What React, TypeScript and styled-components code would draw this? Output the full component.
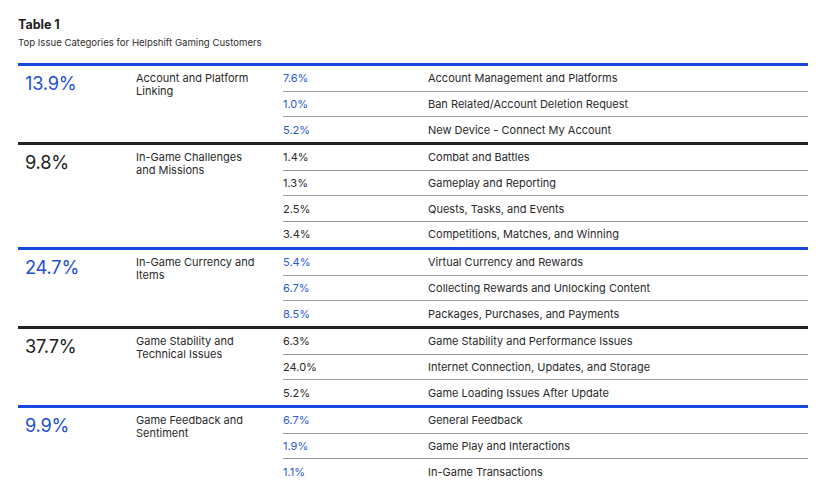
import React from "react";
import styled, { createGlobalStyle } from "styled-components";

const Global = createGlobalStyle`
  html, body { margin: 0; padding: 0; background: #fff; }
  body { font-family: Inter, "Noto Sans", sans-serif; color: #262626; }
`;

const Page = styled.div`
  padding: 17px 20px 0 18px;
  width: 828px;
  box-sizing: border-box;
`;

const Title = styled.div`
  font-size: 12.5px;
  font-weight: 700;
  color: #1d1d1d;
  line-height: 16px;
`;

const Subtitle = styled.div`
  font-size: 9.6px;
  color: #2e2e2e;
  line-height: 14px;
  margin-top: 3px;
  margin-bottom: 13px;
`;

const Group = styled.div<{ $blue: boolean }>`
  display: grid;
  grid-template-columns: 118px 147px 1fr;
  border-top: 3px solid ${(p) => (p.$blue ? "#1747dc" : "#222")};
`;

const Big = styled.div<{ $blue: boolean }>`
  padding: 5px 0 0 7px;
  font-size: 18.2px;
  line-height: 24px;
  color: ${(p) => (p.$blue ? "#1d4fd6" : "#222")};
  letter-spacing: -0.2px;
`;

const Category = styled.div`
  padding-top: 6px;
  font-size: 11px;
  line-height: 13px;
  color: #2a2a2a;
`;

const Subs = styled.div`
  display: flex;
  flex-direction: column;
`;

const SubRow = styled.div<{ $blue: boolean }>`
  display: grid;
  grid-template-columns: 145px 1fr;
  align-items: center;
  height: 24.7px;
  font-size: 11px;
  color: #2a2a2a;
  & + & {
    border-top: 1px solid ${(p) => (p.$blue ? "#8ea6ee" : "#9a9a9a")};
  }
`;

const SubPct = styled.span<{ $blue: boolean }>`
  color: ${(p) => (p.$blue ? "#2a5ad6" : "#2a2a2a")};
`;

const SubName = styled.span``;

type G = { pct: string; cat: string; blue: boolean; rows: [string, string][] };

const groups: G[] = [
  {
    pct: "13.9%",
    cat: "Account and Platform Linking",
    blue: true,
    rows: [
      ["7.6%", "Account Management and Platforms"],
      ["1.0%", "Ban Related/Account Deletion Request"],
      ["5.2%", "New Device - Connect My Account"],
    ],
  },
  {
    pct: "9.8%",
    cat: "In-Game Challenges and Missions",
    blue: false,
    rows: [
      ["1.4%", "Combat and Battles"],
      ["1.3%", "Gameplay and Reporting"],
      ["2.5%", "Quests, Tasks, and Events"],
      ["3.4%", "Competitions, Matches, and Winning"],
    ],
  },
  {
    pct: "24.7%",
    cat: "In-Game Currency and Items",
    blue: true,
    rows: [
      ["5.4%", "Virtual Currency and Rewards"],
      ["6.7%", "Collecting Rewards and Unlocking Content"],
      ["8.5%", "Packages, Purchases, and Payments"],
    ],
  },
  {
    pct: "37.7%",
    cat: "Game Stability and Technical Issues",
    blue: false,
    rows: [
      ["6.3%", "Game Stability and Performance Issues"],
      ["24.0%", "Internet Connection, Updates, and Storage"],
      ["5.2%", "Game Loading Issues After Update"],
    ],
  },
  {
    pct: "9.9%",
    cat: "Game Feedback and Sentiment",
    blue: true,
    rows: [
      ["6.7%", "General Feedback"],
      ["1.9%", "Game Play and Interactions"],
      ["1.1%", "In-Game Transactions"],
    ],
  },
];

const CatText = styled.div`
  max-width: 122px;
`;

export default function App() {
  return (
    <>
      <Global />
      <Page>
        <Title>Table 1</Title>
        <Subtitle>Top Issue Categories for Helpshift Gaming Customers</Subtitle>
        {groups.map((g) => (
          <Group key={g.pct + g.cat} $blue={g.blue}>
            <Big $blue={g.blue}>{g.pct}</Big>
            <Category>
              <CatText>{g.cat}</CatText>
            </Category>
            <Subs>
              {g.rows.map(([p, n]) => (
                <SubRow key={n} $blue={g.blue}>
                  <SubPct $blue={g.blue}>{p}</SubPct>
                  <SubName>{n}</SubName>
                </SubRow>
              ))}
            </Subs>
          </Group>
        ))}
      </Page>
    </>
  );
}
